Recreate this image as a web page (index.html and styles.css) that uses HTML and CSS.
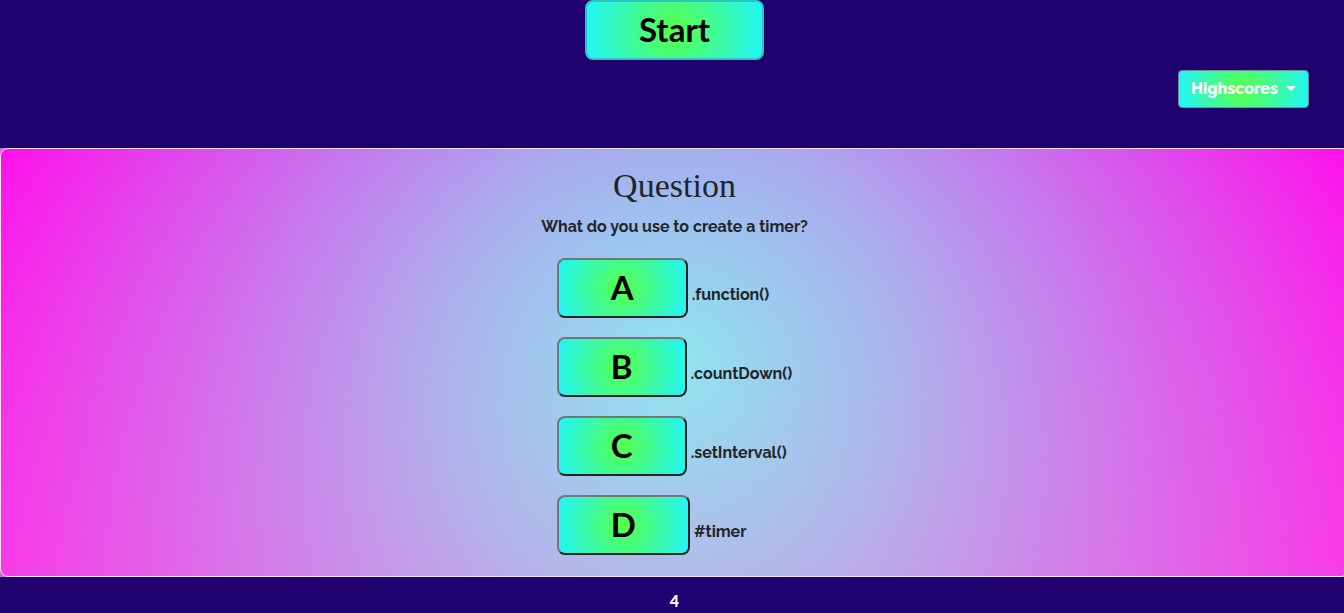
FILE: index.html
```html
<!DOCTYPE html>
<html lang="en">
<head>
  <meta charset="utf-8">
  <meta name="viewport" content="width=device-width, initial-scale=1">
  <title>Code Quiz</title>
  <link rel="stylesheet" href="styles.css">
</head>
<body>
  <div class="page">
    <header class="header">
      <button class="btn btn-start" type="button">Start</button>
      <button class="btn-scores" type="button" aria-haspopup="true">Highscores<span class="caret"></span></button>
    </header>
    <main class="card-wrap">
      <section class="card">
        <h1 class="card-title">Question</h1>
        <p class="card-text">What do you use to create a timer?</p>
        <div class="options">
          <div class="option"><button class="btn" id="a" type="button">A</button><label for="a">.function()</label></div>
          <div class="option"><button class="btn" id="b" type="button">B</button><label for="b">.countDown()</label></div>
          <div class="option"><button class="btn" id="c" type="button">C</button><label for="c">.setInterval()</label></div>
          <div class="option"><button class="btn" id="d" type="button">D</button><label for="d">#timer</label></div>
        </div>
      </section>
    </main>
    <footer class="timer">4</footer>
  </div>
</body>
</html>
```

FILE: styles.css
```css
* {
  box-sizing: border-box;
}

body {
  margin: 0;
  overflow: hidden;
  background: #1f016f;
  color: #212529;
  font-family: Raleway, Lato, sans-serif;
  font-size: 16px;
  font-weight: 700;
  line-height: 24px;
}

.page {
  width: calc(100% + 5px);
}

.header {
  display: flex;
  flex-direction: column;
  align-items: center;
  gap: 10px;
  padding-bottom: 40px;
}

.btn {
  height: 60px;
  padding: 0 52px 2px;
  border: 2px solid;
  border-color: #767676 #212121 #212121 #767676;
  border-radius: 8px;
  background: radial-gradient(circle, #57ff47 0%, #22f5fb 100%);
  color: #000;
  font-family: Lato, sans-serif;
  font-size: 33px;
  font-weight: 700;
}

.btn-start {
  border-color: #2cc3c0;
}

.btn-scores {
  display: flex;
  align-items: center;
  gap: 8px;
  height: 38px;
  align-self: flex-end;
  margin-right: 40px;
  padding: 0 12px 2px;
  border: 1px solid #6c8c8d;
  border-radius: 4px;
  background: radial-gradient(circle, #57ff47 0%, #22f5fb 100%);
  color: #fff;
  font-family: Raleway, Lato, sans-serif;
  font-size: 16px;
  font-weight: 800;
}

.caret {
  border: 5px solid transparent;
  border-top-color: #fff;
  border-bottom: 0;
}

.card-wrap {
  background: #c56fce;
}

.card {
  display: flex;
  flex-direction: column;
  align-items: center;
  padding: 17px 20px 21px;
  border: 1px solid #f0e4f4;
  border-radius: 8px;
  background:
    linear-gradient(rgba(225, 240, 215, 0), rgba(225, 240, 215, 0.19)),
    radial-gradient(circle, #86e4f2 0%, #a9aaee 33%, #ff10eb 100%);
}

.card-title {
  margin: 0 0 9px;
  font-family: "Liberation Serif", serif;
  font-size: 34px;
  font-weight: 400;
  line-height: 40px;
}

.card-text {
  margin: 0 0 19px;
}

.options {
  display: grid;
  gap: 19px;
}

.option {
  display: flex;
  align-items: center;
  gap: 4px;
}

.option label {
  padding-top: 14px;
}

.timer {
  padding-top: 12px;
  color: #fff;
  font-family: Lato, sans-serif;
  font-weight: 900;
  text-align: center;
}
```
